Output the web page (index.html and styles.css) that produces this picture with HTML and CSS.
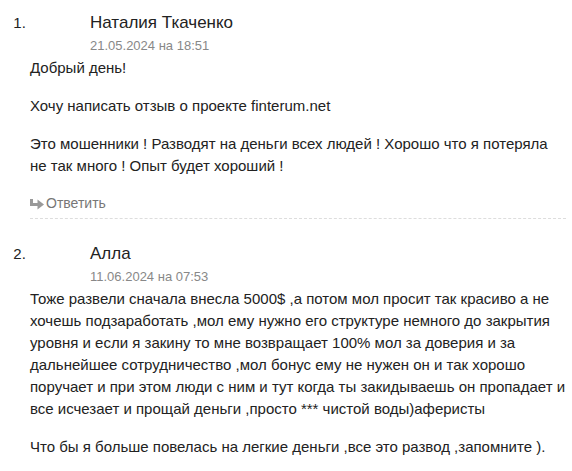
FILE: index.html
```html
<!DOCTYPE html>
<html lang="ru">
  <head>
    <meta charset="UTF-8" />
    <meta name="viewport" content="width=device-width, initial-scale=1.0" />
    <title>Отзывы</title>
    <link rel="stylesheet" href="styles.css">
  </head>
  <body>
    <ol class="comments">
      <li class="comment">
        <div class="comment-head">
          <div class="author">Наталия Ткаченко</div>
          <div class="date">21.05.2024 на 18:51</div>
        </div>
        <div class="comment-body">
          <p>Добрый день!</p>
          <p>Хочу написать отзыв о проекте finterum.net</p>
          <p>Это мошенники ! Разводят на деньги всех людей ! Хорошо что я потеряла не так много ! Опыт будет хороший !</p>
        </div>
        <a class="reply" href="#">
          <svg class="reply-icon" width="14" height="10" viewBox="0 0 14 10">
            <path d="M1.5 0 V5.5 H8" fill="none" stroke="currentColor" stroke-width="3" />
            <path d="M7.5 0.5 L14 5.5 L7.5 10.5 Z" fill="currentColor" />
          </svg>
          Ответить
        </a>
      </li>
      <li class="comment">
        <div class="comment-head">
          <div class="author">Алла</div>
          <div class="date">11.06.2024 на 07:53</div>
        </div>
        <div class="comment-body">
          <p>Тоже развели сначала внесла 5000$ ,а потом мол просит так красиво а не хочешь подзаработать ,мол ему нужно его структуре немного до закрытия уровня и если я закину то мне возвращает 100% мол за доверия и за дальнейшее сотрудничество ,мол бонус ему не нужен он и так хорошо поручает и при этом люди с ним и тут когда ты закидываешь он пропадает и все исчезает и прощай деньги ,просто *** чистой воды)аферисты</p>
          <p>Что бы я больше повелась на легкие деньги ,все это развод ,запомните ).</p>
        </div>
      </li>
    </ol>
  </body>
</html>
```

FILE: styles.css
```css
body {
  margin: 0;
  background: #fff;
  color: #222;
  font-family: "Liberation Sans", Arial, sans-serif;
}

.comments {
  margin: 0 6px 0 8px;
  padding: 0 0 0 22px;
  font-size: 15px;
}

.comment {
  padding-top: 12px;
}

.comment + .comment {
  margin-top: 12px;
}

.comment-head {
  padding-left: 60px;
}

.author {
  font-size: 17px;
  line-height: 22px;
  color: #222;
}

.date {
  margin-top: 3px;
  font-size: 13px;
  line-height: 18px;
  color: #888;
}

.comment-body {
  margin-top: 2px;
}

.comment-body p {
  margin: 0 0 16px;
  line-height: 22px;
}

.reply {
  display: flex;
  align-items: center;
  gap: 2px;
  margin-top: 6px;
  padding-bottom: 5px;
  border-bottom: 1px dashed #ddd;
  font-size: 14px;
  line-height: 20px;
  color: #777;
  text-decoration: none;
}

.reply-icon {
  color: #999;
  overflow: visible;
  margin-top: 1px;
}
```
